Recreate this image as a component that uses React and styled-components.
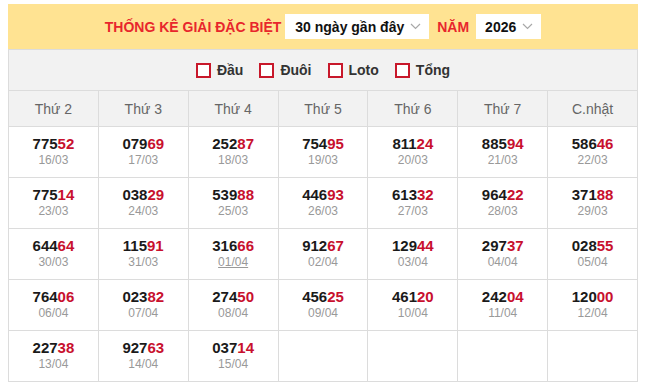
import React from "react";
import styled, { createGlobalStyle } from "styled-components";

const Global = createGlobalStyle`
  html, body { margin: 0; padding: 0; background: #fff; }
  body { font-family: "Liberation Sans", Arial, sans-serif; }
`;

const Wrap = styled.div`
  width: 630px;
  margin: 4px 0 0 8px;
`;

const TopBar = styled.div`
  height: 45px;
  background: #ffe392;
  display: flex;
  align-items: center;
  justify-content: center;
`;

const Title = styled.span`
  color: #e8262c;
  font-weight: bold;
  font-size: 14px;
  margin: ${(p) => p.$m || "0"};
  white-space: nowrap;
`;

const Select = styled.div`
  height: 25px;
  background: #fff;
  display: flex;
  align-items: center;
  padding: 0 8px 0 ${(p) => p.$pl || 10}px;
  box-sizing: border-box;
  font-weight: bold;
  font-size: 14px;
  color: #111;
  white-space: nowrap;
  gap: ${(p) => p.$gap || 6}px;
`;

const Chevron = () => (
  <svg width="11" height="7" viewBox="0 0 11 7">
    <polyline points="1,1 5.5,5.5 10,1" fill="none" stroke="#a8a8a8" strokeWidth="1.2" />
  </svg>
);

const Grid = styled.div`
  display: grid;
  grid-template-columns: repeat(7, 1fr);
  border-left: 1px solid #dcdcdc;
  border-top: 1px solid #dcdcdc;
`;

const OptionsRow = styled.div`
  grid-column: 1 / -1;
  height: 40px;
  background: #f2f2f2;
  border-right: 1px solid #dcdcdc;
  border-bottom: 1px solid #dcdcdc;
  display: flex;
  align-items: center;
  justify-content: center;
  gap: 16px;
`;

const Option = styled.label`
  display: flex;
  align-items: center;
  gap: 6px;
  font-weight: bold;
  font-size: 14px;
  color: #333;
`;

const Box = styled.span`
  width: 15px;
  height: 15px;
  box-sizing: border-box;
  border: 2px solid #c8182b;
  background: #fff;
  display: inline-block;
`;

const HeadCell = styled.div`
  height: 35px;
  background: #f2f2f2;
  border-right: 1px solid #dcdcdc;
  border-bottom: 1px solid #dcdcdc;
  display: flex;
  align-items: center;
  justify-content: center;
  font-size: 14px;
  color: #666;
`;

const Cell = styled.div`
  height: 50px;
  background: #fff;
  border-right: 1px solid #dcdcdc;
  border-bottom: 1px solid #dcdcdc;
  display: flex;
  flex-direction: column;
  align-items: center;
  justify-content: center;
`;

const Num = styled.div`
  font-weight: bold;
  font-size: 15px;
  line-height: 16px;
  color: #1a1a1a;
`;

const Red = styled.span`
  color: #c8102e;
`;

const DateText = styled.div`
  font-size: 12px;
  line-height: 16px;
  color: #999;
  text-decoration: ${(p) => (p.$u ? "underline" : "none")};
`;

const heads = ["Thứ 2", "Thứ 3", "Thứ 4", "Thứ 5", "Thứ 6", "Thứ 7", "C.nhật"];

const data = [
  ["77552", "16/03"], ["07969", "17/03"], ["25287", "18/03"], ["75495", "19/03"], ["81124", "20/03"], ["88594", "21/03"], ["58646", "22/03"],
  ["77514", "23/03"], ["03829", "24/03"], ["53988", "25/03"], ["44693", "26/03"], ["61332", "27/03"], ["96422", "28/03"], ["37188", "29/03"],
  ["64464", "30/03"], ["11591", "31/03"], ["31666", "01/04"], ["91267", "02/04"], ["12944", "03/04"], ["29737", "04/04"], ["02855", "05/04"],
  ["76406", "06/04"], ["02382", "07/04"], ["27450", "08/04"], ["45625", "09/04"], ["46120", "10/04"], ["24204", "11/04"], ["12000", "12/04"],
  ["22738", "13/04"], ["92763", "14/04"], ["03714", "15/04"], null, null, null, null,
];

export default function App() {
  return (
    <>
      <Global />
      <Wrap>
        <TopBar>
          <Title $m="0 4px 0 0">THỐNG KÊ GIẢI ĐẶC BIỆT</Title>
          <Select $pl={10}>
            30 ngày gần đây <Chevron />
          </Select>
          <Title $m="0 7px 0 8px">NĂM</Title>
          <Select $pl={9}>
            2026 <Chevron />
          </Select>
        </TopBar>
        <Grid>
          <OptionsRow>
            {["Đầu", "Đuôi", "Loto", "Tổng"].map((l) => (
              <Option key={l}>
                <Box />
                {l}
              </Option>
            ))}
          </OptionsRow>
          {heads.map((h) => (
            <HeadCell key={h}>{h}</HeadCell>
          ))}
          {data.map((d, i) => (
            <Cell key={i}>
              {d && (
                <>
                  <Num>
                    {d[0].slice(0, 3)}
                    <Red>{d[0].slice(3)}</Red>
                  </Num>
                  <DateText $u={d[1] === "01/04"}>{d[1]}</DateText>
                </>
              )}
            </Cell>
          ))}
        </Grid>
      </Wrap>
    </>
  );
}
